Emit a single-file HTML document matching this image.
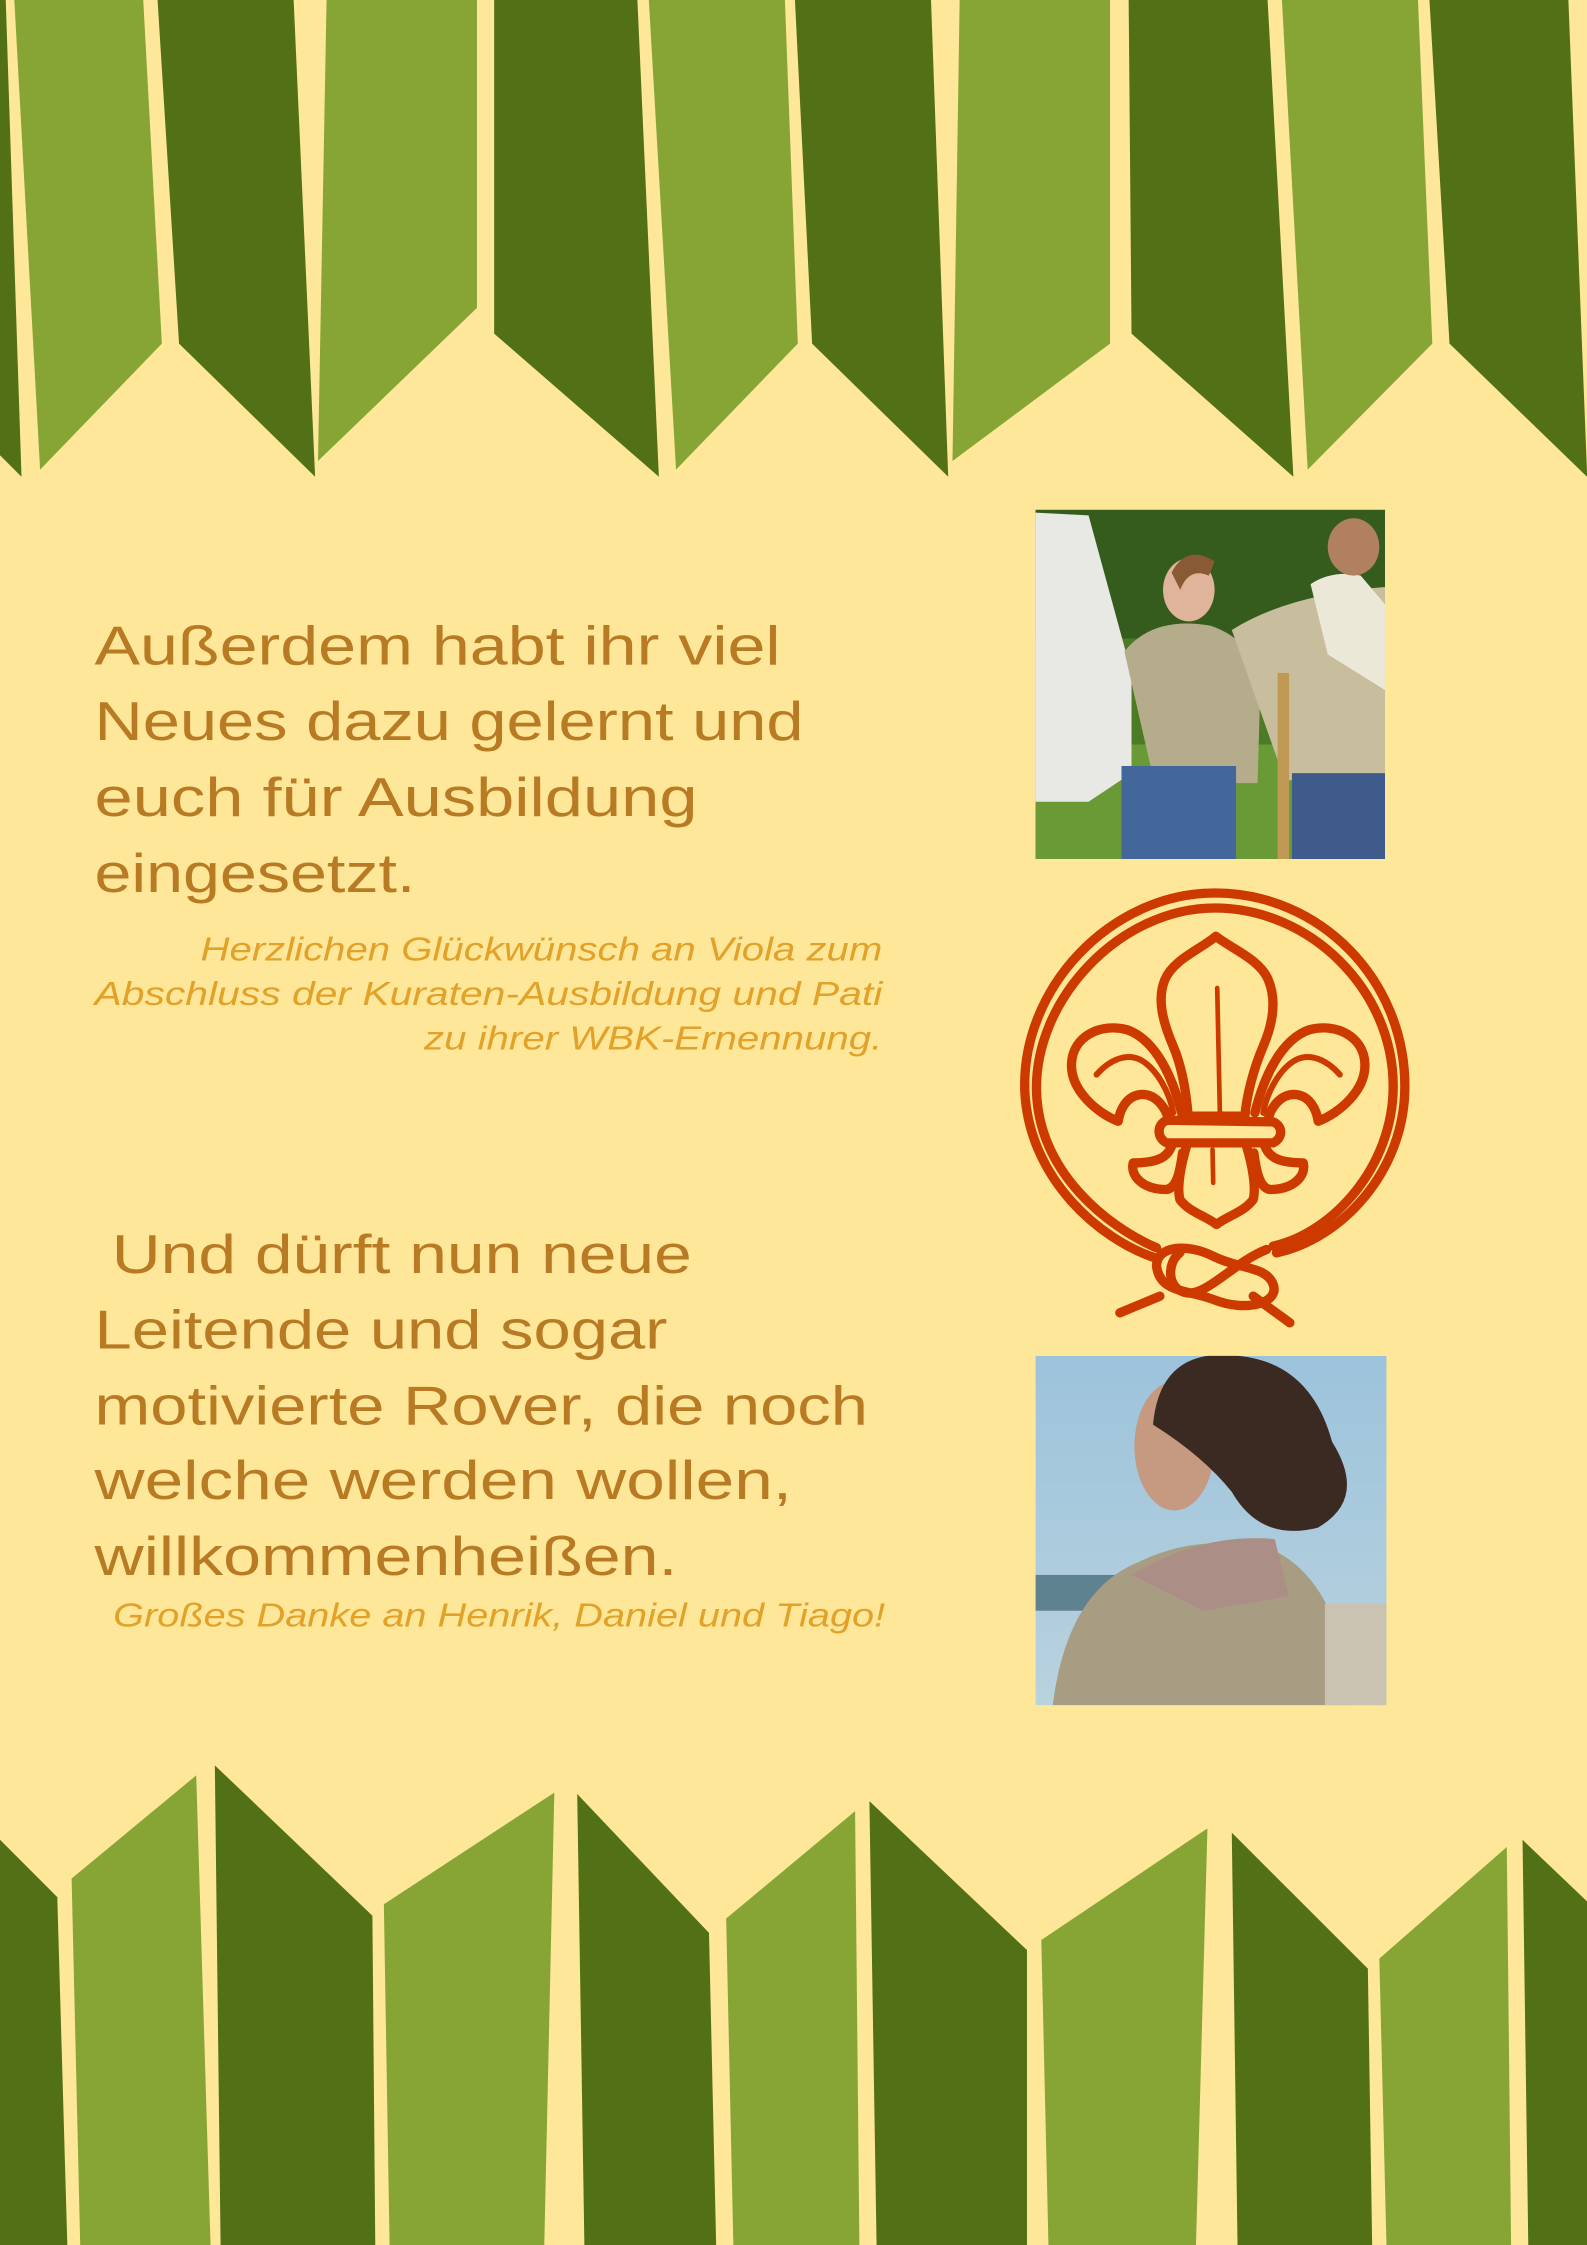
<!DOCTYPE html>
<html><head><meta charset="utf-8"><style>
html,body{margin:0;padding:0;background:#fee799;}
svg{display:block}
</style></head><body>
<svg width="1587" height="2245" viewBox="0 0 1108 1568" preserveAspectRatio="none" xmlns="http://www.w3.org/2000/svg">
<rect width="1108" height="1568" fill="#fee799"/>
<!-- top banner -->
<g fill="#527015">
<polygon points="0,0 4,0 15,333 0,318"/>
<polygon points="110,0 205,0 220,333 125,240"/>
<polygon points="345,0 445,0 460,333 345,233"/>
<polygon points="555,0 650,0 662,333 567,240"/>
<polygon points="788,0 885,0 903,333 790,233"/>
<polygon points="998,0 1095,0 1108,330 1108,333 1012,240"/>
</g>
<g fill="#86a535">
<polygon points="10,0 100,0 113,240 28,328"/>
<polygon points="228,0 333,0 333,215 222,322"/>
<polygon points="453,0 548,0 557,240 472,328"/>
<polygon points="670,0 775,0 775,240 665,322"/>
<polygon points="895,0 990,0 1000,240 913,328"/>
</g>
<!-- bottom banner -->
<g fill="#527015">
<polygon points="0,1285 40,1325 47,1568 0,1568"/>
<polygon points="150,1233 260,1338 262,1568 154,1568"/>
<polygon points="403,1253 495,1350 500,1568 408,1568"/>
<polygon points="607,1258 717,1362 717,1568 612,1568"/>
<polygon points="860,1280 955,1375 958,1568 864,1568"/>
<polygon points="1063,1285 1108,1328 1108,1568 1067,1568"/>
</g>
<g fill="#86a535">
<polygon points="50,1312 137,1240 147,1568 56,1568"/>
<polygon points="268,1330 387,1252 380,1568 272,1568"/>
<polygon points="507,1340 597,1265 600,1568 512,1568"/>
<polygon points="727,1355 843,1277 835,1568 732,1568"/>
<polygon points="963,1368 1052,1290 1055,1568 968,1568"/>
</g>
<!-- text -->
<g font-family="Liberation Sans, sans-serif" fill="#b97a24" font-size="38">
<text x="66" y="464" textLength="479" lengthAdjust="spacingAndGlyphs">Außerdem habt ihr viel</text>
<text x="66" y="517" textLength="495" lengthAdjust="spacingAndGlyphs">Neues dazu gelernt und</text>
<text x="66" y="570" textLength="421" lengthAdjust="spacingAndGlyphs">euch für Ausbildung</text>
<text x="66" y="623" textLength="224" lengthAdjust="spacingAndGlyphs">eingesetzt.</text>
<text x="78" y="889" textLength="405" lengthAdjust="spacingAndGlyphs">Und dürft nun neue</text>
<text x="66" y="942" textLength="400" lengthAdjust="spacingAndGlyphs">Leitende und sogar</text>
<text x="66" y="995" textLength="540" lengthAdjust="spacingAndGlyphs">motivierte Rover, die noch</text>
<text x="66" y="1047" textLength="487" lengthAdjust="spacingAndGlyphs">welche werden wollen,</text>
<text x="66" y="1100" textLength="407" lengthAdjust="spacingAndGlyphs">willkommenheißen.</text>
</g>
<g font-family="Liberation Sans, sans-serif" fill="#e2a129" font-size="23" font-style="italic">
<text x="140" y="671" textLength="476" lengthAdjust="spacingAndGlyphs">Herzlichen Glückwünsch an Viola zum</text>
<text x="66" y="702" textLength="550" lengthAdjust="spacingAndGlyphs">Abschluss der Kuraten-Ausbildung und Pati</text>
<text x="296" y="733" textLength="320" lengthAdjust="spacingAndGlyphs">zu ihrer WBK-Ernennung.</text>
<text x="79" y="1136" textLength="539" lengthAdjust="spacingAndGlyphs">Großes Danke an Henrik, Daniel und Tiago!</text>
</g>
<!-- photo 1 -->
<defs>
<clipPath id="c1"><rect x="723" y="356" width="244" height="244"/></clipPath>
<clipPath id="c2"><rect x="723" y="947" width="245" height="244"/></clipPath>
<linearGradient id="sky" x1="0" y1="0" x2="0" y2="1"><stop offset="0" stop-color="#9cc3dc"/><stop offset="1" stop-color="#b9d2de"/></linearGradient>
</defs>
<g clip-path="url(#c1)">
<rect x="723" y="356" width="244" height="244" fill="#4d7a25"/>
<rect x="723" y="356" width="244" height="90" fill="#355c1c"/>
<rect x="723" y="520" width="244" height="80" fill="#6a9a35"/>
<polygon points="723,358 760,360 790,470 790,540 760,560 723,560" fill="#e8e8e4"/>
<ellipse cx="830" cy="412" rx="18" ry="22" fill="#e0b49a"/>
<path d="M818,400 q10,-20 30,-8 l-4,10 q-14,-6 -20,10z" fill="#8a5a35"/>
<path d="M785,455 q20,-25 60,-18 q30,10 35,40 l-2,70 l-72,0 z" fill="#b5ac8c"/>
<rect x="783" y="535" width="80" height="65" fill="#43679a"/>
<path d="M860,440 q40,-25 107,-30 l0,135 l-70,0 z" fill="#c8bd9c"/>
<path d="M915,408 q15,-10 35,-6 l17,20 l0,60 l-40,-25z" fill="#ece8d8"/>
<ellipse cx="945" cy="382" rx="18" ry="20" fill="#b08060"/>
<rect x="902" y="540" width="65" height="60" fill="#3f5b8c"/>
<rect x="892" y="470" width="8" height="130" fill="#c09a55"/>
</g>
<!-- photo 2 -->
<g clip-path="url(#c2)">
<rect x="723" y="947" width="245" height="244" fill="url(#sky)"/>
<rect x="723" y="1100" width="60" height="25" fill="#5e8290"/>
<path d="M735,1191 q10,-80 60,-100 q40,-20 90,-10 q50,20 60,110z" fill="#a89c83"/>
<rect x="925" y="1120" width="43" height="71" fill="#cac3b2"/>
<path d="M790,1100 q50,-30 100,-25 l10,40 l-60,10z" fill="#ab8f86"/>
<ellipse cx="820" cy="1010" rx="28" ry="45" fill="#c59a80"/>
<path d="M805,995 q5,-55 60,-48 q50,5 65,60 q25,40 -10,60 q-40,10 -60,-25 q-20,-25 -55,-47z" fill="#3a2a22"/>
</g>
<!-- scout logo -->
<g transform="translate(698.1,614.4) scale(0.2327)" fill="none" stroke="#cc3a00" stroke-width="28" stroke-linejoin="round" stroke-linecap="round">
<path d="M465,1135 C300,1080 90,900 75,640 C60,330 330,40 645,40 C960,40 1215,300 1215,620 C1215,880 1020,1080 830,1120"/>
<path d="M470,1105 C320,1040 120,880 110,640 C100,360 360,85 645,85 C930,85 1180,330 1180,620 C1180,860 1000,1060 820,1100"/>
<path d="M648,170 C600,210 520,240 495,300 C470,360 490,430 520,500 C550,570 560,650 565,710 L735,710 C740,650 760,570 790,500 C820,430 830,360 805,300 C780,240 700,210 648,170 Z"/>
<path d="M652,325 L660,700" stroke-width="14"/>
<path d="M545,700 C520,600 470,480 380,450 C300,430 220,470 215,550 C210,630 290,700 355,725 C360,690 380,650 420,645 C470,640 500,690 505,720"/>
<path d="M290,585 C330,540 380,520 420,540 C470,565 510,640 520,700" stroke-width="18"/>
<path d="M765,700 C790,600 840,480 930,450 C1010,430 1090,470 1095,550 C1100,630 1020,700 955,725 C950,690 930,650 890,645 C840,640 810,690 805,720"/>
<path d="M1020,585 C980,540 930,520 890,540 C840,565 800,640 790,700" stroke-width="18"/>
<path d="M500,722 L820,727 C850,740 850,775 820,790 L500,790 C470,775 470,735 500,722 Z"/>
<path d="M560,800 C545,850 530,920 540,960 C570,1000 620,1010 650,1035 C680,1010 730,1000 760,960 C770,920 755,850 740,800"/>
<path d="M638,810 L640,910" stroke-width="14"/>
<path d="M515,800 C500,840 460,850 400,850 C390,890 430,930 500,930 C530,925 540,880 548,820"/>
<path d="M795,800 C810,840 850,850 910,850 C920,890 880,930 810,930 C780,925 770,880 762,820"/>
<path d="M470,1160 C470,1100 560,1090 640,1130 C720,1170 800,1160 820,1215 C840,1270 740,1300 640,1260 C560,1230 480,1240 470,1160 Z"/>
<path d="M540,1120 C500,1150 500,1230 560,1240 C620,1250 700,1150 800,1110"/>
<path d="M480,1250 L360,1300"/>
<path d="M760,1250 L870,1330"/>
</g>
</svg>
</body></html>
